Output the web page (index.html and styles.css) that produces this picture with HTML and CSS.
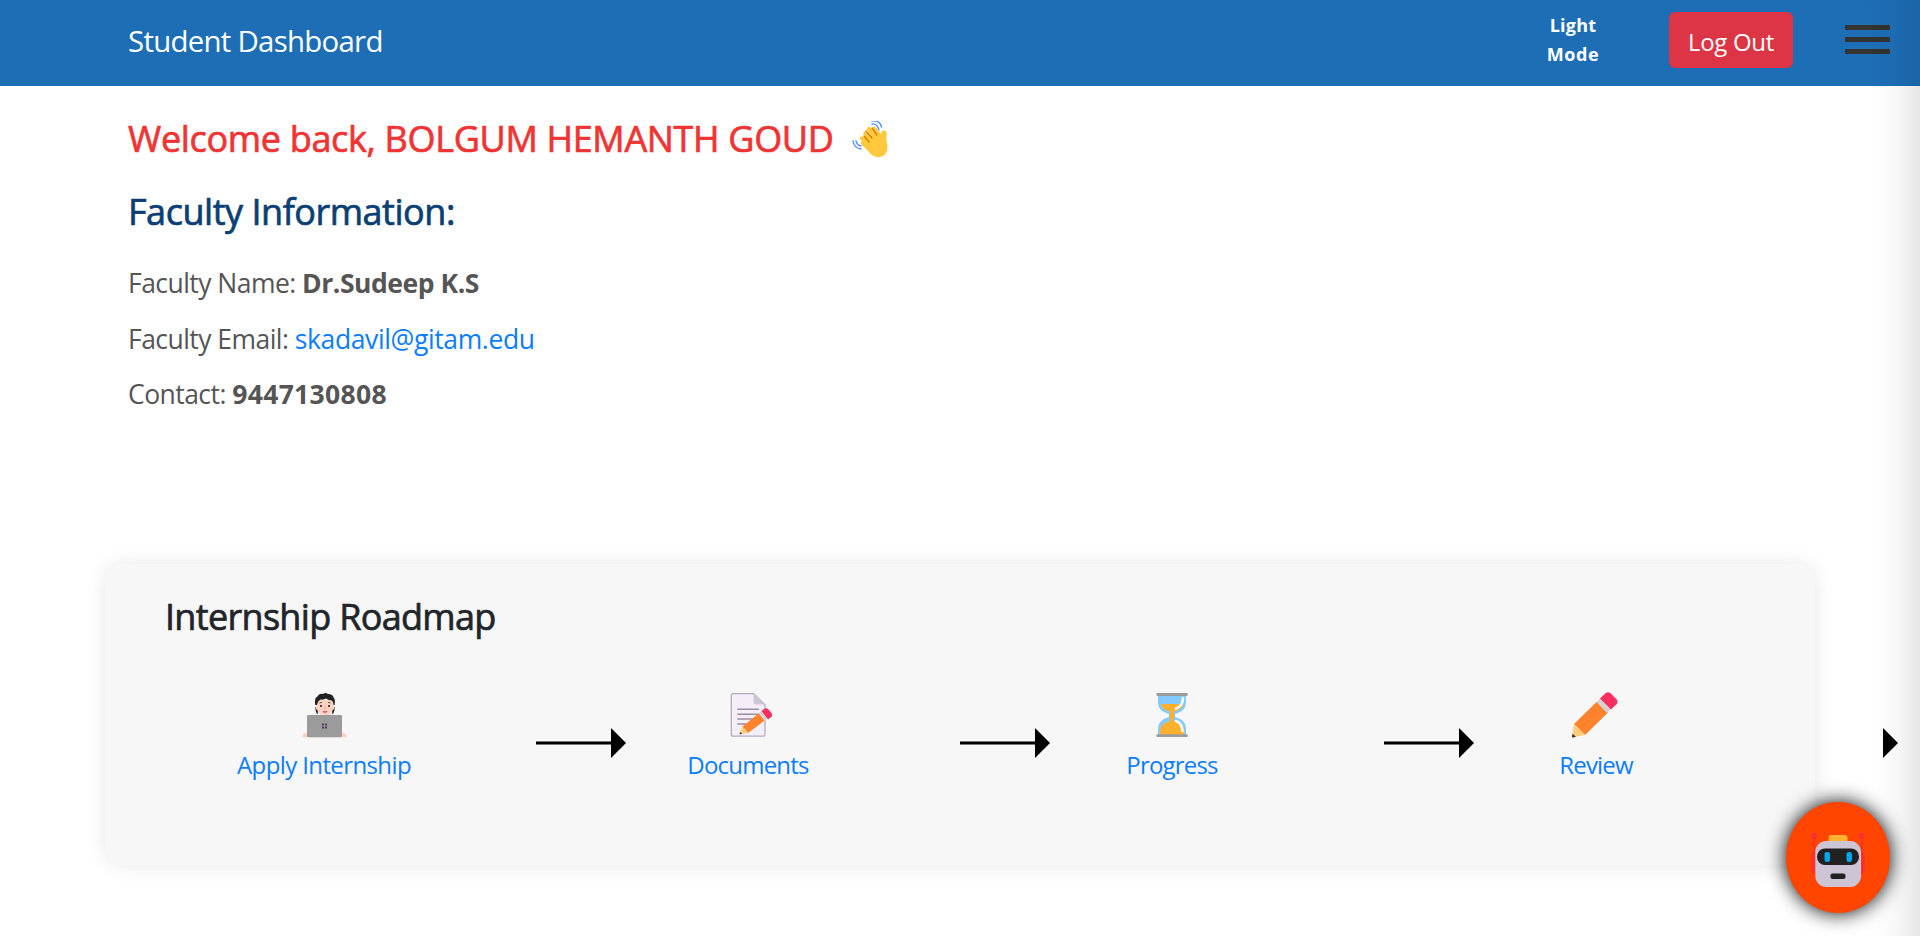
FILE: index.html
```html
<!DOCTYPE html>
<html lang="en">
<head>
<meta charset="utf-8">
<title>Student Dashboard</title>
<link rel="stylesheet" href="styles.css">
</head>
<body>
<header class="topbar">
  <div class="brand">Student Dashboard</div>
  <div class="mode"><span class="t-light">Light</span><br><span class="t-mode">Mode</span></div>
  <button class="logout">Log Out</button>
  <div class="burger"><i></i><i></i><i></i></div>
</header>
<main>
  <section class="intro">
    <h1 class="welcome"><span>Welcome back, BOLGUM HEMANTH GOUD</span>
      <svg class="wave" viewBox="0 0 38 38"><path d="M10 20 7.500 17.500Q9 14 12 16L16 19 11 13Q12 9 15 11L20 16 14.500 8.500Q16 4.500 19 7L25 14 20.500 8Q20 4.500 23.500 6L29 13Q30 8 32.500 9.500 35.500 10 34.500 15 33.500 18 35 22 37 34 28 36 21 37 16 30L9 23Q8 21 10 20Z" fill="#ffc83d"/><path d="M14 10l6 7M12 15l5 6M20 7l5 7" fill="none" stroke="#d67d00" stroke-width="1.300" stroke-linecap="round"/><path d="M20 3q5-1 7 6M20 0q8-1 9.500 6M1 20q1 7 8 8M4 20q1 4 5 5" fill="none" stroke="#4c8df0" stroke-width="1.300" stroke-linecap="round"/></svg>
    </h1>
    <h2 class="subhead">Faculty Information:</h2>
    <p><span class="label">Faculty Name: </span><b class="t-name">Dr.Sudeep K.S</b></p>
    <p><span class="label">Faculty Email: </span><a class="t-email" href="#">skadavil@gitam.edu</a></p>
    <p><span class="label">Contact: </span><b class="t-phone">9447130808</b></p>
  </section>
  <section class="roadmap">
    <h2 class="roadmap-title">Internship Roadmap</h2>
    <div class="steps">
      <div class="step">
        <svg class="icon" viewBox="0 0 48 46"><path d="M15.300 15h2.500v7.500Q15.500 21 15.300 15ZM34.700 15h-2.500v7.500Q34.500 21 34.700 15Z" fill="#212121"/><path d="M17 8h16v5q1.500 0 1.300 2.500-.3 2.500-1.800 2.500-1 5.500-7.500 5.500T17.500 18q-1.500 0-1.800-2.500Q15.500 13 17 13Z" fill="#ffd3bf"/><path d="M15.300 13Q14 6 17.500 4.500 19 1 23 2q2.500-2 5 0 5 0 5.500 3.500 2 1.500 1.200 7.500h-1.200q-.3-4-2.500-5-1.500 1-5-1.500-2 1.500-5.500 1-3 1.500-3.500 5.500Z" fill="#212121"/><path d="M19.500 11l2.500-.6M28 10.400l2.500.6" stroke="#37474f" stroke-width=".9"/><circle cx="21" cy="14" r="1.100" fill="#212121"/><circle cx="29" cy="14" r="1.100" fill="#212121"/><path d="M22.300 19.300h5.400q-2.700 3-5.400 0Z" fill="#c93b63"/><path d="M25 14.500v2.800" stroke="#e59d87"/><path d="M2 45.300q0-4.800 6-4.800h33q6 0 6 4.800Z" fill="#ffd3bf"/><rect x="7" y="23" width="35" height="22.300" rx="1.300" fill="#9b9b9b"/><path d="M22 31.500h2v2h-2zm3 0h2v2h-2zm-3 3h2v2h-2zm3 0h2v2h-2z" fill="#533566"/></svg>
        <a class="t-apply" href="#">Apply Internship</a><span class="arrow"></span>
      </div>
      <div class="step">
        <svg class="icon" viewBox="0 0 48 46"><path d="M9 1.700h20.500l11.500 11V42q0 2.200-2 2.200H9.300q-2 0-2-2V3.500Q7.300 1.700 9 1.700Z" fill="#f3eef8" stroke="#b4acbc" stroke-width="1.300"/><path d="M29.500 1.500V10q0 2.500 2.500 2.500h9Z" fill="#cdc4d6"/><path d="M13.300 17.300H35M13.300 22.300H35M13.300 27H29M13.300 32H23" stroke="#998ea4" stroke-width="1.600"/><path d="m18.500 34.500 17-13.700 6 7L24 41Z" fill="#ff822d"/><path d="m18.500 34.300-3 8L24.300 41Z" fill="#ffce7c"/><path d="m16.300 40-.8 2.300 2.700-.3Z" fill="#402a32"/><path d="m34.700 21.500 3.500-3 6 7.500-3.700 3Z" fill="#d3d3d3"/><path d="m37.500 19 3-2.300q2-1.200 4 .8l3 3.500q1.600 2-.4 4l-3 2.500Z" fill="#f92f60"/></svg>
        <a class="t-docs" href="#">Documents</a><span class="arrow"></span>
      </div>
      <div class="step">
        <svg class="icon" viewBox="0 0 48 46"><path d="M10 3h28v8q0 8-11 11v3q11 3 11 11v7H10v-7q0-8 11-11v-3Q10 19 10 11Z" fill="#83cbff"/><path d="M13 12h22q-1 6-9 7.500V29q10 3 10 9v5H12v-5q0-6 10-9v-9.500Q14 18 13 12Z" fill="#ffb02e"/><path d="M35 6q0 8-7 10.500M28 29q6 2 6.500 10" fill="none" stroke="#fff" stroke-width="2.600" stroke-linecap="round"/><path d="M9.700 2.500h28.800M9.700 43.700h28.800" stroke="#9b9b9b" stroke-width="2.800" stroke-linecap="round"/></svg>
        <a class="t-progress" href="#">Progress</a><span class="arrow"></span>
      </div>
      <div class="step">
        <svg class="icon" viewBox="2 0 48 46"><path d="M4 32 27 9.500 38 20.500 15 43Z" fill="#ff822d"/><path d="M4 32 2 45.500 15 43Z" fill="#ffce7c"/><path d="m2.500 41.500-.5 4 4-.6Z" fill="#402a32"/><path d="m26.500 10 4-4 10.500 11-4 4Z" fill="#d3d3d3"/><path d="m30 6.500 5.500-5.200q2.500-2 5 0l6 6q2 2.300 0 5L41 17.500Z" fill="#f92f60"/></svg>
        <a class="t-review" href="#">Review</a><span class="arrow arrow-end"></span>
      </div>
    </div>
  </section>
</main>
<div class="edge-shade"></div>
<button class="bot" aria-label="Chat"><svg viewBox="0 0 54 54"><path d="M3.300 3v17M50.700 3v17" stroke="#f8312f" stroke-width="1.600"/><circle cx="3.300" cy="3" r="3" fill="#f8312f"/><circle cx="50.700" cy="3" r="3" fill="#f8312f"/><rect x=".5" y="19" width="53" height="21" rx="3" fill="#f8312f"/><rect x="17.500" y="2" width="19" height="9" rx="3" fill="#ffb02e"/><rect x="4.300" y="8" width="45.700" height="46" rx="11" fill="#cdc4d6"/><rect x="6" y="15.500" width="42" height="16.500" rx="8" fill="#212121"/><rect x="13.500" y="19" width="5.500" height="10" rx="2.300" fill="#00a6ed"/><rect x="35.500" y="19" width="5.500" height="10" rx="2.300" fill="#00a6ed"/><rect x="19.500" y="40.500" width="15" height="5.500" rx="2" fill="#212121"/></svg></button>
</body>
</html>
```
FILE: styles.css
```css
* { box-sizing: border-box; }
body { margin: 0; height: 936px; overflow: hidden; background: #fff; font-family: "Open Sans", "Noto Sans", sans-serif; position: relative; white-space: nowrap; }
h1, h2, p { margin: 0; }
a { text-decoration: none; color: #0d7dff; }
button { border: 0; font-family: inherit; }

.topbar { height: 86px; background: #1e6eb6; color: #fff; display: flex; align-items: flex-start; padding: 0 30px 0 128px; }
.brand { flex: 1; font-size: 29.400px; line-height: 83px; letter-spacing: -.72px; }
.mode { width: 96px; margin-right: 48px; padding-top: 11px; font-size: 18px; line-height: 29px; font-weight: 700; text-align: center; }
.t-light { letter-spacing: .25px; }
.t-mode { letter-spacing: .55px; }
.logout { width: 124px; height: 56px; margin-top: 12px; padding: 3px 0 0; border-radius: 6px; background: #dc3545; color: #fff; font-size: 24px; letter-spacing: -.3px; }
.burger { width: 45px; margin: 25px 0 0 52px; display: grid; gap: 7px; }
.burger i { height: 5px; background: #333; }

.intro { height: 478px; padding: 31px 0 0 128px; color: #555; }
.welcome, .subhead, .roadmap-title { font-size: 36px; line-height: 44px; font-weight: 500; -webkit-text-stroke: .7px currentColor; }
.welcome { color: #f03434; display: flex; letter-spacing: -.33px; }
.wave { width: 38px; height: 38px; margin: 4px 0 0 18px; }
.subhead { color: #0b3f74; margin: 29px 0; letter-spacing: -.47px; }
.intro p { font-size: 26.500px; line-height: 40px; margin-bottom: 15.500px; }
.label { letter-spacing: -.54px; }
.t-name { letter-spacing: -.45px; }
.t-email { letter-spacing: -.38px; }
.t-phone { letter-spacing: .33px; }

.roadmap { margin: 0 105px; height: 301px; padding: 31px 0 0 7px; background: #f7f7f7; border-radius: 20px; box-shadow: 0 0 20px rgba(0,0,0,.1); }
.roadmap-title { padding-left: 53px; color: #212529; letter-spacing: -.68px; }
.steps { display: flex; margin-top: 53px; }
.step { flex: 0 0 424px; position: relative; display: flex; flex-direction: column; align-items: center; font-size: 24px; line-height: 36px; gap: 9px; }
.t-apply { letter-spacing: -.61px; }
.t-docs { letter-spacing: -.78px; }
.t-progress { letter-spacing: -.8px; }
.t-review { letter-spacing: -.85px; }
.icon { width: 48px; height: 46px; }
.arrow { position: absolute; left: 100%; top: 49px; width: 76px; height: 4px; background: linear-gradient(#777 1px, #000 1px 3px, #777 3px); }
.arrow::after { content: ""; position: absolute; left: 75px; top: -13px; border: 15px solid transparent; border-right: 0; border-left-color: #000; }
.arrow-end { background: none; }

.edge-shade { position: absolute; right: 0; top: 0; width: 60px; height: 936px; box-shadow: inset -50px 0 50px -50px rgba(0,0,0,.2); pointer-events: none; }
.bot { position: absolute; left: 1786px; top: 802px; width: 104px; height: 111px; border-radius: 50%; background: #ff4500; box-shadow: 0 0 20px #000; padding: 0; display: grid; place-items: center; }
.bot svg { width: 54px; height: 54px; overflow: visible; margin-top: 5px; }
```
